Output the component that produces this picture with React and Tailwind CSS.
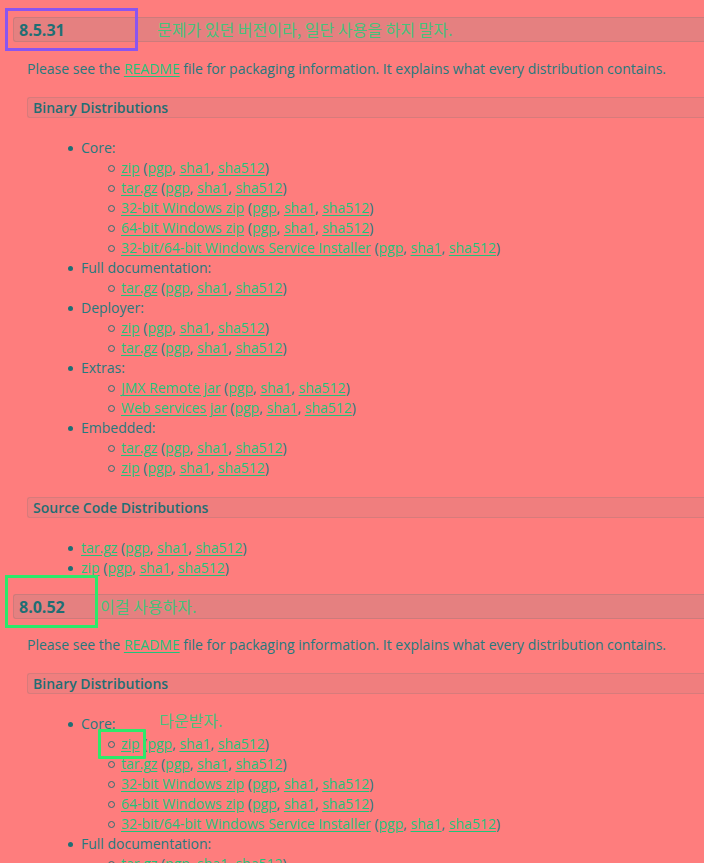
import React from "react";

const FONT = { fontFamily: '"Open Sans", "Noto Sans", sans-serif' };
const KR = { fontFamily: '"Noto Sans CJK KR", "Noto Sans", sans-serif' };

function Link({ children }) {
  return <span className="text-[#1fc47a] underline underline-offset-2">{children}</span>;
}

function Sigs() {
  return (
    <>
      {" ("}
      <Link>pgp</Link>, <Link>sha1</Link>, <Link>sha512</Link>
      {")"}
    </>
  );
}

function Disc() {
  return <span className="w-[5px] h-[5px] rounded-full bg-[#1f6f74] shrink-0" />;
}

function Circle() {
  return <span className="w-[7px] h-[7px] rounded-full border-[1.5px] border-[#2a6f74] shrink-0" />;
}

function Item({ label, children, note }) {
  return (
    <li>
      <div className="h-5 flex items-center gap-2 relative">
        <Disc />
        <span>{label}</span>
        {note && (
          <span className="absolute left-[91px] top-[-4px] text-[16px] text-[#46c27a]" style={KR}>
            {note}
          </span>
        )}
      </div>
      {children && <ul className="pl-[40px]">{children}</ul>}
    </li>
  );
}

function Sub({ name, box }) {
  return (
    <li className="h-5 flex items-center gap-[6px] relative">
      <Circle />
      <span>
        <Link>{name}</Link>
        <Sigs />
      </span>
      {box && (
        <span className="absolute left-[-10px] top-[-5px] w-[48px] h-[30px] border-[3px] border-[#2ee86a] rounded-[1px]" />
      )}
    </li>
  );
}

function Header({ version, note, boxClass, noteLeft }) {
  return (
    <div className="relative pl-[13px]">
      <div className="h-[25px] bg-[#e58080] border border-r-0 border-[#cc7b7b] rounded-l-[3px] flex items-center pl-[5px]">
        <span className="text-[16px] font-bold text-[#1f6f74]">{version}</span>
      </div>
      <span className={"absolute top-[2px] text-[16px] text-[#46c27a] " + noteLeft} style={KR}>
        {note}
      </span>
      <span className={"absolute " + boxClass} />
    </div>
  );
}

function SubHeader({ title }) {
  return (
    <div className="ml-[27px] h-[21px] bg-[#f07e7e] border border-r-0 border-[#d77b7b] rounded-l-[3px] flex items-center pl-[5px]">
      <span className="text-[14px] font-semibold text-[#1f6f74]">{title}</span>
    </div>
  );
}

function Para() {
  return (
    <p className="pl-[27px] h-5 leading-5 text-[14px]">
      Please see the <Link>README</Link> file for packaging information. It explains what every distribution contains.
    </p>
  );
}

export default function App() {
  return (
    <div className="w-[704px] h-[863px] overflow-hidden bg-[#fe7d7d] text-[#257a7e] text-[14px] leading-5" style={FONT}>
      <div className="pt-[17px]">
        <Header
          version="8.5.31"
          note="문제가 있던 버전이라, 일단 사용을 하지 말자."
          noteLeft="left-[157px]"
          boxClass="left-[5px] top-[-9px] w-[133px] h-[43px] border-[3px] border-[#8a55f0]"
        />

        <div className="mt-[17px]">
          <Para />
        </div>

        <div className="mt-[18px]">
          <SubHeader title="Binary Distributions" />
        </div>

        <ul className="mt-[20px] pl-[68px]">
          <Item label="Core:">
            <Sub name="zip" />
            <Sub name="tar.gz" />
            <Sub name="32-bit Windows zip" />
            <Sub name="64-bit Windows zip" />
            <Sub name="32-bit/64-bit Windows Service Installer" />
          </Item>
          <Item label="Full documentation:">
            <Sub name="tar.gz" />
          </Item>
          <Item label="Deployer:">
            <Sub name="zip" />
            <Sub name="tar.gz" />
          </Item>
          <Item label="Extras:">
            <Sub name="JMX Remote jar" />
            <Sub name="Web services jar" />
          </Item>
          <Item label="Embedded:">
            <Sub name="tar.gz" />
            <Sub name="zip" />
          </Item>
        </ul>

        <div className="mt-[19px]">
          <SubHeader title="Source Code Distributions" />
        </div>

        <ul className="mt-[20px] pl-[68px]">
          <li className="h-5 flex items-center gap-2">
            <Disc />
            <span>
              <Link>tar.gz</Link>
              <Sigs />
            </span>
          </li>
          <li className="h-5 flex items-center gap-2">
            <Disc />
            <span>
              <Link>zip</Link>
              <Sigs />
            </span>
          </li>
        </ul>

        <div className="mt-[16px]">
          <Header
            version="8.0.52"
            note="이걸 사용하자."
            noteLeft="left-[100px]"
            boxClass="left-[5px] top-[-19px] w-[93px] h-[53px] border-[3px] border-[#2ee86a]"
          />
        </div>

        <div className="mt-[16px]">
          <Para />
        </div>

        <div className="mt-[18px]">
          <SubHeader title="Binary Distributions" />
        </div>

        <ul className="mt-[20px] pl-[68px]">
          <Item label="Core:" note="다운받자.">
            <Sub name="zip" box />
            <Sub name="tar.gz" />
            <Sub name="32-bit Windows zip" />
            <Sub name="64-bit Windows zip" />
            <Sub name="32-bit/64-bit Windows Service Installer" />
          </Item>
          <Item label="Full documentation:">
            <Sub name="tar.gz" />
          </Item>
        </ul>
      </div>
    </div>
  );
}
